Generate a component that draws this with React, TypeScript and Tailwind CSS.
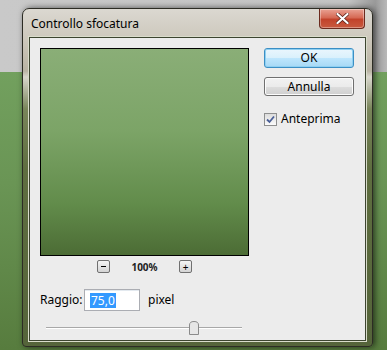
import React from "react";

const font = { fontFamily: '"Segoe UI", "Noto Sans", "Open Sans", sans-serif' };

function CloseButton() {
  return (
    <div className="absolute right-[7px] top-0 flex h-[20px] w-[46px] items-center justify-center rounded-b-[4px] border border-t-0 border-[#6b2a1e] bg-[linear-gradient(to_bottom,#e9a394_0%,#d66a55_45%,#c2432b_55%,#c85a3f_100%)] shadow-[inset_0_0_0_1px_rgba(255,255,255,0.35)]">
      <svg width="13" height="11" viewBox="0 0 13 11">
        <path d="M1.5 1 L11.5 10 M11.5 1 L1.5 10" stroke="#5a2018" strokeWidth="3.6" strokeLinecap="round" />
        <path d="M1.5 1 L11.5 10 M11.5 1 L1.5 10" stroke="#ffffff" strokeWidth="2.2" strokeLinecap="round" />
      </svg>
    </div>
  );
}

function WinButton({ label, focused }: { label: string; focused?: boolean }) {
  return (
    <div
      className={
        focused
          ? "flex h-[20px] w-[90px] items-center justify-center rounded-[3px] border border-[#3c8fc4] bg-[linear-gradient(to_bottom,#eaf6fd_0%,#d9f0fc_50%,#bee6fd_51%,#a7d9f5_100%)] text-[12px] text-black shadow-[inset_0_0_0_1px_#8fd0f2]"
          : "flex h-[19px] w-[90px] items-center justify-center rounded-[3px] border border-[#707070] bg-[linear-gradient(to_bottom,#f2f2f2_0%,#ebebeb_50%,#dddddd_51%,#cfcfcf_100%)] text-[12px] text-black shadow-[inset_0_0_0_1px_#fcfcfc]"
      }
    >
      {label}
    </div>
  );
}

function SmallButton({ children }: { children: React.ReactNode }) {
  return (
    <div className="flex h-[13px] w-[13px] items-center justify-center rounded-[2px] border border-[#707070] bg-[linear-gradient(to_bottom,#f4f4f4,#d4d4d4)] text-[10px] leading-none text-black">
      {children}
    </div>
  );
}

export default function App() {
  return (
    <div className="relative h-[350px] w-[387px] overflow-hidden" style={font}>
      {/* desktop behind the dialog */}
      <div className="flex h-full flex-col">
        <div className="h-[72px] bg-[linear-gradient(to_right,#c9c9c9_0%,#c4c4c4_90%,#9a9a9a_97%,#b8b8b8_100%)]" />
        <div className="flex-1 bg-[linear-gradient(to_bottom,#72a05e_0%,#6a9555_40%,#577c3e_100%)]" />
      </div>

      {/* dialog window */}
      <div className="absolute left-[22px] top-[8px] flex h-[339px] w-[351px] flex-col rounded-t-[7px] rounded-b-[4px] border border-[#2c2c24] bg-[linear-gradient(to_bottom,#dbd8d1_0px,#cdc8bc_30px,#b9b3a3_62px,#d8d6cc_68px,#79855a_100px,#5f6e40_160px,#55643a_100%)] px-[6px] pb-[5px] pt-[28px] shadow-[2px_0_6px_rgba(0,0,0,0.6)]">
        <div className="absolute left-[8px] top-[7px] text-[12px] leading-[16px] text-black">Controllo sfocatura</div>
        <CloseButton />

        {/* client area */}
        <div className="flex flex-1 border border-[#3d4530] shadow-[0_0_0_1px_#d9dccb]">
          <div className="flex flex-1 bg-[#ececec] pl-[10px] pt-[10px]">
            <div className="flex w-[209px] flex-col">
              <div className="h-[208px] w-[209px] border border-black bg-[linear-gradient(to_bottom,#8aae77_0%,#7ca467_40%,#628c4b_75%,#4c6c35_100%)]" />
              <div className="mt-[4px] flex items-center justify-center">
                <SmallButton>
                  <span className="mb-[1px] block h-[1px] w-[5px] bg-black" />
                </SmallButton>
                <div className="w-[69px] text-center text-[10px] font-bold leading-none text-[#222]">100%</div>
                <SmallButton>+</SmallButton>
              </div>
              <div className="mt-[16px] flex items-center text-[12px] text-black">
                <span className="w-[44px]">Raggio:</span>
                <div className="flex h-[22px] w-[56px] items-center border border-[#abadb3] bg-white pl-[5px] shadow-[inset_0_1px_0_#e3e9ef]">
                  <span className="bg-[#3399ff] px-[1px] leading-[15px] text-white">75,0</span>
                </div>
                <span className="ml-[8px]">pixel</span>
              </div>
              <div className="relative ml-[6px] mt-[10px] h-[14px] w-[196px]">
                <div className="absolute left-0 right-0 top-[6px] h-[1px] bg-[#a8a8a8]" />
                <div className="absolute left-0 right-0 top-[7px] h-[1px] bg-[#ffffff]" />
                <svg className="absolute left-[143px] top-0" width="10" height="14" viewBox="0 0 10 14">
                  <path d="M0.5 4 Q0.5 0.5 5 0.5 Q9.5 0.5 9.5 4 L9.5 13.5 L0.5 13.5 Z" fill="#e6e6e6" stroke="#8a8a8a" />
                </svg>
              </div>
            </div>

            <div className="ml-[15px] flex flex-col">
              <WinButton label="OK" focused />
              <div className="mt-[9px]">
                <WinButton label="Annulla" />
              </div>
              <div className="mt-[14px] flex items-center text-[12px] text-black">
                <div className="flex h-[13px] w-[13px] items-center justify-center border border-[#8e8f8f] bg-[linear-gradient(to_bottom,#dcdcdc,#fbfbfb)]">
                  <svg width="9" height="9" viewBox="0 0 9 9">
                    <path d="M1 4.5 L3.5 7 L8 1.5" fill="none" stroke="#4a5f97" strokeWidth="1.8" />
                  </svg>
                </div>
                <span className="ml-[4px]">Anteprima</span>
              </div>
            </div>
          </div>
        </div>
      </div>
    </div>
  );
}
